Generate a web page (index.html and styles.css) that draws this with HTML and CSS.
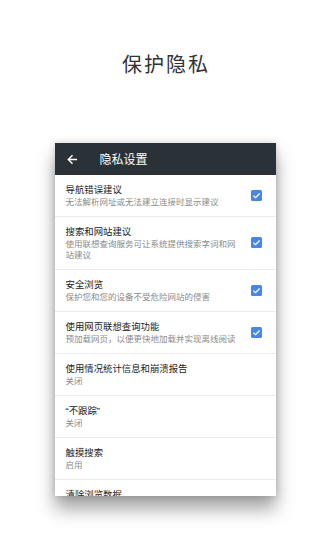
FILE: index.html
```html
<!DOCTYPE html>
<html lang="zh">
<head>
<meta charset="utf-8">
<link rel="stylesheet" href="styles.css">
</head>
<body>
<h1 class="headline">保护隐私</h1>
<div class="card">
  <div class="appbar">
    <svg class="back" viewBox="0 0 12 12" width="11" height="11"><path d="M11 6H1.6M6 1.4L1.4 6L6 10.6" fill="none" stroke="#fff" stroke-width="1.5"/></svg>
    <span class="appbar-title">隐私设置</span>
  </div>
  <div class="list">
    <div class="row">
      <div class="text"><div class="t">导航错误建议</div><div class="s">无法解析网址或无法建立连接时显示建议</div></div>
      <span class="cb"><svg viewBox="0 0 12 12" width="11" height="11"><path d="M2.6 6.2L5 8.4L9.4 3.8" fill="none" stroke="#fff" stroke-width="1.4"/></svg></span>
    </div>
    <div class="row">
      <div class="text"><div class="t">搜索和网站建议</div><div class="s">使用联想查询服务可让系统提供搜索字词和网站建议</div></div>
      <span class="cb"><svg viewBox="0 0 12 12" width="11" height="11"><path d="M2.6 6.2L5 8.4L9.4 3.8" fill="none" stroke="#fff" stroke-width="1.4"/></svg></span>
    </div>
    <div class="row">
      <div class="text"><div class="t">安全浏览</div><div class="s">保护您和您的设备不受危险网站的侵害</div></div>
      <span class="cb"><svg viewBox="0 0 12 12" width="11" height="11"><path d="M2.6 6.2L5 8.4L9.4 3.8" fill="none" stroke="#fff" stroke-width="1.4"/></svg></span>
    </div>
    <div class="row">
      <div class="text"><div class="t">使用网页联想查询功能</div><div class="s">预加载网页，以便更快地加载并实现离线阅读</div></div>
      <span class="cb"><svg viewBox="0 0 12 12" width="11" height="11"><path d="M2.6 6.2L5 8.4L9.4 3.8" fill="none" stroke="#fff" stroke-width="1.4"/></svg></span>
    </div>
    <div class="row">
      <div class="text"><div class="t">使用情况统计信息和崩溃报告</div><div class="s">关闭</div></div>
    </div>
    <div class="row">
      <div class="text"><div class="t"><span class="q">“</span>不跟踪<span class="q">”</span></div><div class="s">关闭</div></div>
    </div>
    <div class="row">
      <div class="text"><div class="t">触摸搜索</div><div class="s">启用</div></div>
    </div>
    <div class="row">
      <div class="text"><div class="t">清除浏览数据</div><div class="s">清除历史记录、Cookie、网站数据和缓存</div></div>
    </div>
  </div>
</div>
</body>
</html>
```
FILE: styles.css
```css
html, body {
  margin: 0;
  padding: 0;
  background: #fff;
}
body {
  width: 330px;
  height: 550px;
  overflow: hidden;
  display: flex;
  flex-direction: column;
  align-items: center;
  font-family: "Noto Sans CJK SC", "Noto Sans", sans-serif;
}
.headline {
  margin: 52px 0 0 0;
  font-size: 20px;
  line-height: 24px;
  font-weight: 400;
  letter-spacing: 2px;
  color: #333;
  padding-left: 2px;
}
.card {
  margin-top: 67px;
  width: 221px;
  height: 353px;
  overflow: hidden;
  background: #fff;
  box-shadow: 0 13px 17px rgba(0,0,0,0.36), 0 0 7px rgba(0,0,0,0.18);
}
.appbar {
  height: 32px;
  background: #2a3237;
  display: flex;
  align-items: center;
  padding-left: 12px;
}
.back {
  display: block;
}
.appbar-title {
  margin-left: 22px;
  color: #fff;
  font-size: 12px;
  line-height: 16px;
}
.row {
  display: flex;
  align-items: center;
  padding: 8px 14px 9px 11px;
  border-bottom: 1px solid #ebebeb;
}
.text {
  width: 173px;
  flex: none;
}
.t {
  font-size: 9.4px;
  line-height: 13px;
  color: #222;
}
.q {
  font-family: "Liberation Sans", sans-serif;
}
.s {
  font-size: 8.5px;
  line-height: 11px;
  color: #8a8a8a;
}
.cb {
  margin-left: auto;
  width: 11px;
  height: 11px;
  border-radius: 1.5px;
  background: #4a86e8;
  display: flex;
}
.cb svg {
  display: block;
}
```
